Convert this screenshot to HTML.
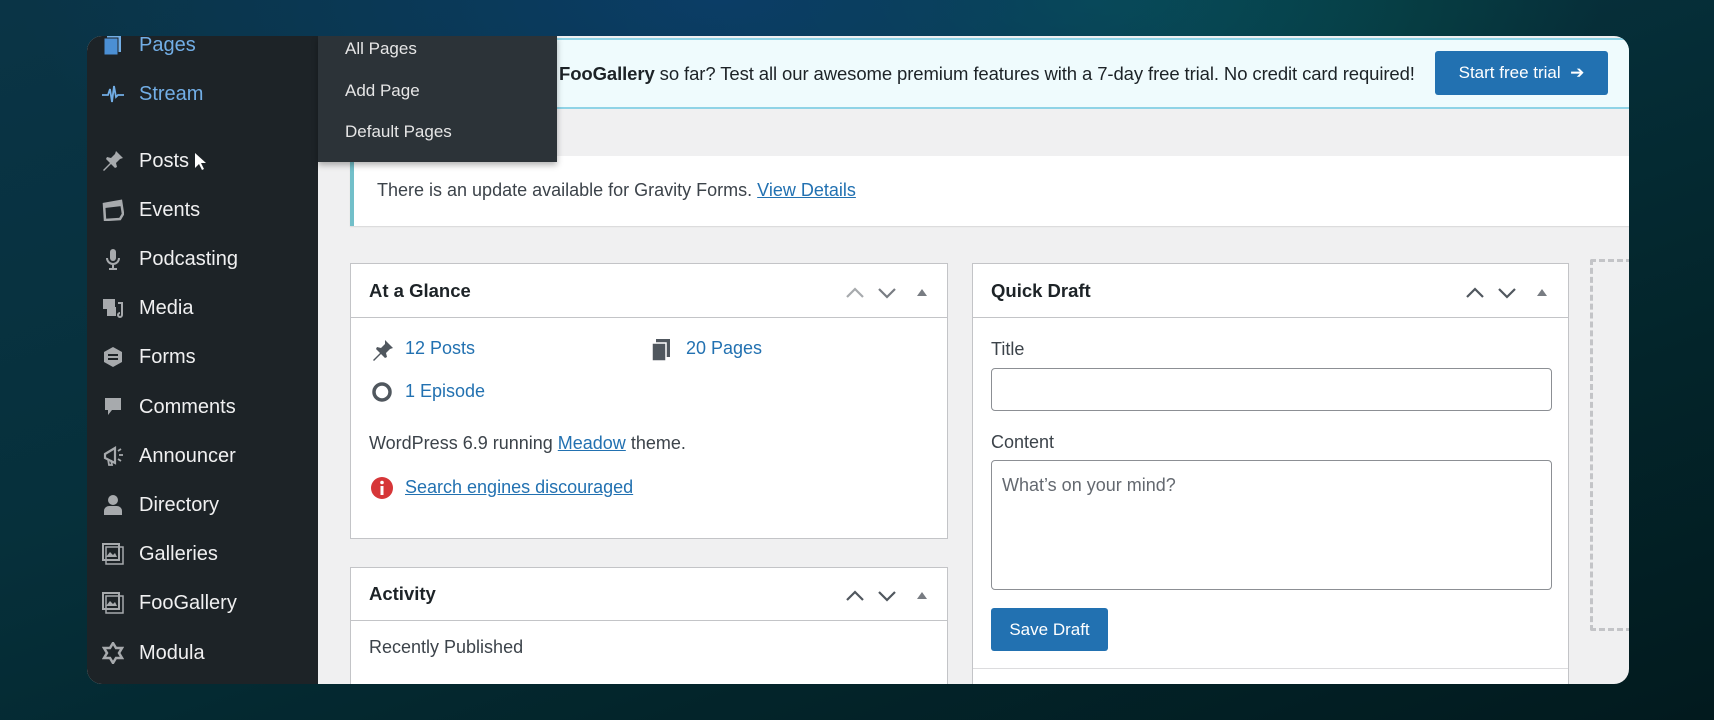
<!DOCTYPE html>
<html><head><meta charset="utf-8"><style>
*{margin:0;padding:0;box-sizing:border-box}
body{width:1714px;height:720px;overflow:hidden;position:relative;font-family:"Liberation Sans",sans-serif;
background:radial-gradient(ellipse 700px 260px at 720px 0px,#0b3d66 0%,rgba(11,61,102,0) 100%),radial-gradient(ellipse 500px 200px at 1100px 0px,#05524f 0%,rgba(5,82,79,0) 100%),linear-gradient(160deg,#0a3446 0%,#06303b 40%,#03252b 70%,#021a1e 100%);}
.a{position:absolute}
.card{left:87px;top:36px;width:1542px;height:648px;border-radius:15px;overflow:hidden;background:#f0f0f1}
.side{left:0;top:0;width:231px;height:648px;background:#1d2327}
.si{position:absolute;left:52px;font-size:20px;color:#f0f0f1;line-height:24px;transform:translateY(-12px)}
.ic{position:absolute;left:15px;width:22px;height:22px;transform:translateY(-11px)}
.fly{left:231px;top:0;width:239px;height:126px;background:#2c3338;box-shadow:0 3px 6px rgba(0,0,0,.3)}
.fi{position:absolute;left:27px;font-size:17px;color:#e6e6e6;transform:translateY(-10px)}
.t{font-size:18px;color:#3c434a;position:absolute;white-space:nowrap}
.lnk{color:#2271b1}
.u{text-decoration:underline}
.box{position:absolute;background:#fff;border:1px solid #c3c4c7}
.hd{position:absolute;left:0;right:0;top:0;border-bottom:1px solid #c3c4c7}
.ht{position:absolute;left:18px;font-size:18.5px;font-weight:bold;color:#1d2327}
</style></head><body>
<div class="a card">
 <div class="a" style="left:231px;top:2px;width:1311px;height:71px;background:#effbfd;border-top:2px solid #8fd3e6;border-bottom:2px solid #8fd3e6"></div>
 <div class="t" style="left:472px;top:27px;color:#1d2327;font-size:18.5px;letter-spacing:-0.1px"><b>FooGallery</b> so far? Test all our awesome premium features with a 7-day free trial. No credit card required!</div>
 <div class="a" style="left:1348px;top:15px;width:173px;height:44px;background:#2271b1;border-radius:3px;color:#fff;font-size:17px;line-height:44px;text-align:center">Start free trial &nbsp;➔</div>
 <div class="a" style="left:263px;top:120px;width:1279px;height:70px;background:#fff;border-left:4px solid #72bfc9;box-shadow:0 1px 1px rgba(0,0,0,.1)"></div>
 <div class="t" style="left:290px;top:144px">There is an update available for Gravity Forms. <span class="lnk u">View Details</span></div>
 <div class="box" style="left:263px;top:227px;width:598px;height:276px">
  <div class="hd" style="height:54px"><div class="ht" style="top:16px">At a Glance</div>
   <svg class="a" style="left:494px;top:20px" width="100" height="16"><polyline points="2,13 10,5 18,13" fill="none" stroke="#a7aaad" stroke-width="2.2"/><polyline points="34,5 42,13 50,5" fill="none" stroke="#787c82" stroke-width="2.2"/><polygon points="72,12 77,5 82,12" fill="#787c82"/></svg></div>
  <svg class="a" style="left:20px;top:74px" width="24" height="24"><path d="M14 2l8 8-3 1-4 4 1 4-2 1-4-4-7 7-1-1 7-7-4-4 1-2 4 1 4-4z" fill="#50575e"/></svg>
  <div class="t lnk" style="left:54px;top:74px">12 Posts</div>
  <svg class="a" style="left:298px;top:73px" width="24" height="26"><rect x="7" y="2" width="14" height="18" fill="#50575e"/><rect x="3" y="6" width="14" height="18" fill="#50575e" stroke="#fff" stroke-width="1.5"/></svg>
  <div class="t lnk" style="left:335px;top:74px">20 Pages</div>
  <svg class="a" style="left:20px;top:116px" width="24" height="24"><circle cx="11" cy="12" r="8" fill="none" stroke="#50575e" stroke-width="3.5"/></svg>
  <div class="t lnk" style="left:54px;top:117px">1 Episode</div>
  <div class="t" style="left:18px;top:169px">WordPress 6.9 running <span class="lnk u">Meadow</span> theme.</div>
  <svg class="a" style="left:20px;top:212px" width="24" height="24"><circle cx="11" cy="12" r="11" fill="#d63638"/><rect x="9.5" y="10" width="3" height="9" fill="#fff"/><circle cx="11" cy="6.5" r="1.8" fill="#fff"/></svg>
  <div class="t lnk u" style="left:54px;top:213px">Search engines discouraged</div>
 </div>
 <div class="box" style="left:263px;top:531px;width:598px;height:140px">
  <div class="hd" style="height:53px"><div class="ht" style="top:15px">Activity</div>
   <svg class="a" style="left:494px;top:19px" width="100" height="16"><polyline points="2,13 10,5 18,13" fill="none" stroke="#50575e" stroke-width="2.2"/><polyline points="34,5 42,13 50,5" fill="none" stroke="#50575e" stroke-width="2.2"/><polygon points="72,12 77,5 82,12" fill="#787c82"/></svg></div>
  <div class="t" style="left:18px;top:69px">Recently Published</div>
 </div>
 <div class="box" style="left:885px;top:227px;width:597px;height:440px">
  <div class="hd" style="height:54px"><div class="ht" style="top:16px">Quick Draft</div>
   <svg class="a" style="left:492px;top:20px" width="100" height="16"><polyline points="2,13 10,5 18,13" fill="none" stroke="#50575e" stroke-width="2.2"/><polyline points="34,5 42,13 50,5" fill="none" stroke="#50575e" stroke-width="2.2"/><polygon points="72,12 77,5 82,12" fill="#787c82"/></svg></div>
  <div class="t" style="left:18px;top:75px">Title</div>
  <div class="a" style="left:18px;top:104px;width:561px;height:43px;border:1px solid #8c8f94;border-radius:4px"></div>
  <div class="t" style="left:18px;top:168px">Content</div>
  <div class="a" style="left:18px;top:196px;width:561px;height:130px;border:1px solid #8c8f94;border-radius:4px"></div>
  <div class="t" style="left:29px;top:211px;color:#646970">What’s on your mind?</div>
  <div class="a" style="left:18px;top:344px;width:117px;height:43px;background:#2271b1;border-radius:3px;color:#fff;font-size:17px;line-height:43px;text-align:center">Save Draft</div>
  <div class="a" style="left:0;right:0;top:404px;border-top:1px solid #dcdcde"></div>
 </div>
 <div class="a" style="left:1503px;top:223px;width:60px;height:372px;border:3px dashed #c3c4c7;border-radius:2px"></div>
 <div class="a side">
  <svg class="ic" style="top:9px" viewBox="0 0 22 22"><rect x="5" y="1" width="14" height="17" fill="#72aee6"/><rect x="2" y="4" width="14" height="17" fill="#4b8fd4" stroke="#1d2327"/></svg><div class="si" style="top:9px;color:#72aee6">Pages</div>
  <svg class="ic" style="top:58px" viewBox="0 0 22 22"><polyline points="0,12 6,12 8,6 10,19 12,3 14,14 16,12 22,12" fill="none" stroke="#72aee6" stroke-width="1.8"/></svg><div class="si" style="top:58px;color:#72aee6">Stream</div>
  <svg class="ic" style="top:125px" viewBox="0 0 22 22"><path d="M14 1l7 7-3 1-4 4 1 4-2 1-4-4-7 7-1-1 7-7-4-4 1-2 4 1 4-4z" fill="#a7aaad"/></svg><div class="si" style="top:125px">Posts</div>
  <svg class="a" style="left:107px;top:116px" width="14" height="20"><path d="M1 1v15l4-4 3 6 2-1-3-6h5z" fill="#fff"/></svg>
  <svg class="ic" style="top:174px" viewBox="0 0 22 22"><path d="M2 5l17-3 2 13-3 5-15 1z" fill="none" stroke="#a7aaad" stroke-width="2.5"/><path d="M2 5l17-3 1 5-17 2z" fill="#a7aaad"/></svg><div class="si" style="top:174px">Events</div>
  <svg class="ic" style="top:223px" viewBox="0 0 22 22"><rect x="8" y="1" width="6" height="12" rx="3" fill="#a7aaad"/><path d="M5 10a6 6 0 0 0 12 0M11 16v4M7 21h8" fill="none" stroke="#a7aaad" stroke-width="2"/></svg><div class="si" style="top:223px">Podcasting</div>
  <svg class="ic" style="top:272px" viewBox="0 0 22 22"><rect x="1" y="2" width="12" height="10" fill="#a7aaad"/><rect x="5" y="10" width="9" height="9" fill="#a7aaad"/><path d="M16 6h4v12a2 2 0 1 1-2-2" fill="none" stroke="#a7aaad" stroke-width="2"/></svg><div class="si" style="top:272px">Media</div>
  <svg class="ic" style="top:321px" viewBox="0 0 22 22"><path d="M11 1l9 5v10l-9 5-9-5V6z" fill="#a7aaad"/><rect x="6" y="8" width="10" height="2" fill="#1d2327"/><rect x="6" y="12" width="10" height="2" fill="#1d2327"/></svg><div class="si" style="top:321px">Forms</div>
  <svg class="ic" style="top:371px" viewBox="0 0 22 22"><path d="M3 2h16v12h-9l-4 5v-5H3z" fill="#a7aaad"/></svg><div class="si" style="top:371px">Comments</div>
  <svg class="ic" style="top:420px" viewBox="0 0 22 22"><path d="M3 9l10-6v15L3 13z" fill="none" stroke="#a7aaad" stroke-width="2.2"/><path d="M6 14l1 6h3l-1-5M16 6l3-2M17 10h4M16 14l3 2" stroke="#a7aaad" stroke-width="1.8" fill="none"/></svg><div class="si" style="top:420px">Announcer</div>
  <svg class="ic" style="top:469px" viewBox="0 0 22 22"><circle cx="11" cy="6" r="5" fill="#a7aaad"/><path d="M2 21v-4a5 5 0 0 1 5-5h8a5 5 0 0 1 5 5v4z" fill="#a7aaad"/></svg><div class="si" style="top:469px">Directory</div>
  <svg class="ic" style="top:518px" viewBox="0 0 22 22"><rect x="4" y="4" width="17" height="17" fill="none" stroke="#a7aaad" stroke-width="1.5"/><rect x="1" y="1" width="16" height="16" fill="none" stroke="#a7aaad" stroke-width="2"/><path d="M4 14l4-5 3 3 2-2 2 4z" fill="#a7aaad"/></svg><div class="si" style="top:518px">Galleries</div>
  <svg class="ic" style="top:567px" viewBox="0 0 22 22"><rect x="4" y="4" width="17" height="17" fill="none" stroke="#a7aaad" stroke-width="1.5"/><rect x="1" y="1" width="16" height="16" fill="none" stroke="#a7aaad" stroke-width="2"/><path d="M4 14l4-5 3 3 2-2 2 4z" fill="#a7aaad"/></svg><div class="si" style="top:567px">FooGallery</div>
  <svg class="ic" style="top:617px" viewBox="0 0 22 22"><path d="M11 1l3 5h6l-3 5 3 5h-6l-3 5-3-5H2l3-5-3-5h6z" fill="none" stroke="#a7aaad" stroke-width="2.5"/></svg><div class="si" style="top:617px">Modula</div>
 </div>
 <div class="a fly">
  <div class="fi" style="top:13px">All Pages</div>
  <div class="fi" style="top:55px">Add Page</div>
  <div class="fi" style="top:96px">Default Pages</div>
 </div>
</div>
</body></html>
